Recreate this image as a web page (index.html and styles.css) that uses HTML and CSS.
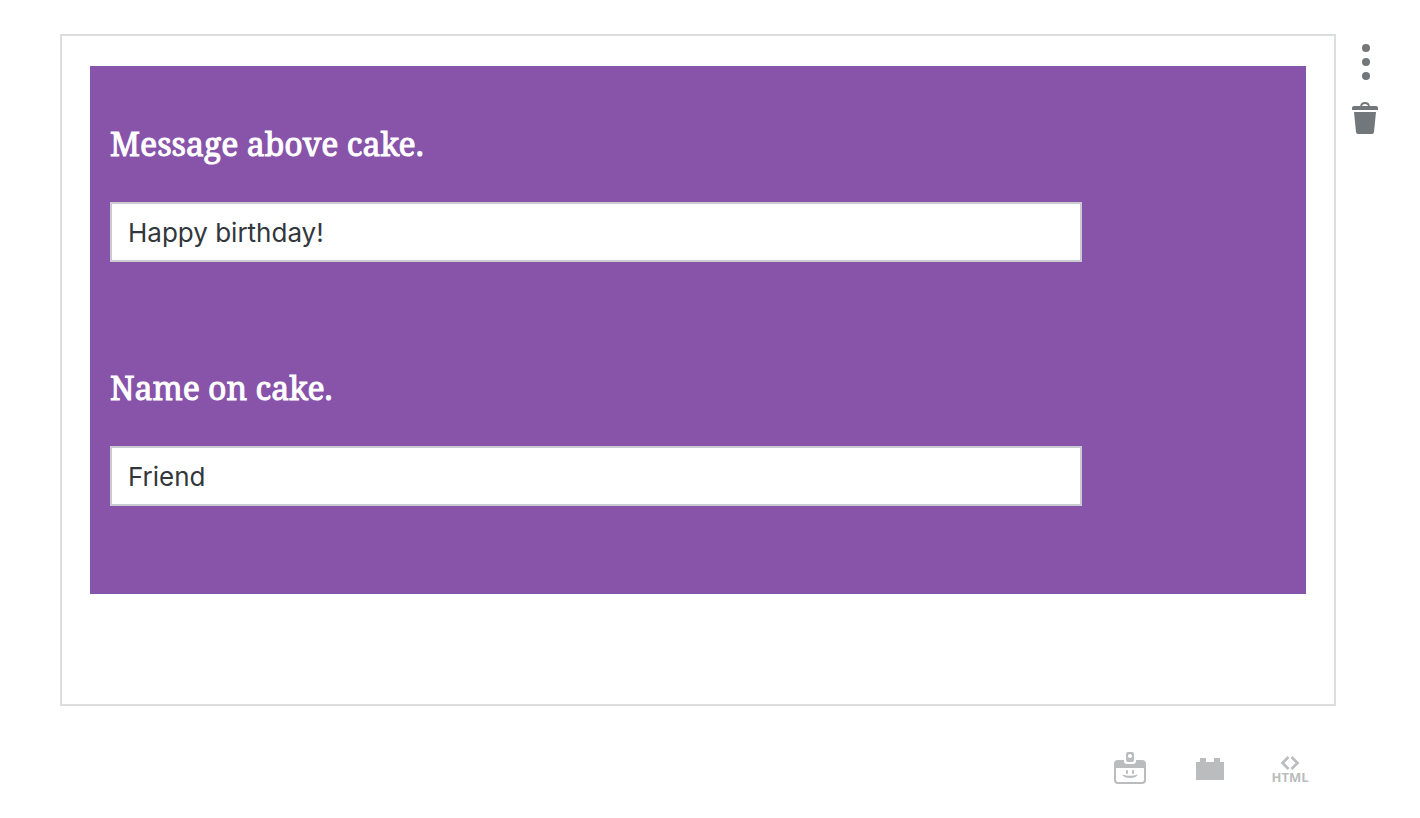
FILE: index.html
```html
<!DOCTYPE html>
<html lang="en">
<head>
<meta charset="utf-8">
<meta name="viewport" content="width=device-width, initial-scale=1">
<title>Cake message block</title>
<link rel="stylesheet" href="styles.css">
</head>
<body>
<main class="editor">
  <div class="block-row">
    <section class="block">
      <form class="cake-form">
        <div class="field">
          <label class="field-label" for="message">Message above cake.</label>
          <input class="field-input" id="message" type="text" value="Happy birthday!">
        </div>
        <div class="field">
          <label class="field-label" for="name">Name on cake.</label>
          <input class="field-input" id="name" type="text" value="Friend">
        </div>
      </form>
    </section>
    <div class="block-actions">
      <button class="icon-button" type="button" aria-label="More options">
        <svg width="28" height="40" viewBox="0 0 28 40" fill="currentColor"><circle cx="14" cy="6" r="4"/><circle cx="14" cy="20" r="4"/><circle cx="14" cy="34" r="4"/></svg>
      </button>
      <button class="icon-button" type="button" aria-label="Delete block">
        <svg width="28" height="34" viewBox="0 0 28 34" fill="currentColor"><path d="M9 4.500C9.500 -.2 16.500 -.2 17 4.500" fill="none" stroke="currentColor" stroke-width="1.800"/><path d="M2 4h22q2 0 2 2v2H0V6q0-2 2-2z"/><path d="M2 10h22l-2 20q-.2 2-2 2H6q-1.800 0-2-2z"/></svg>
      </button>
    </div>
  </div>
  <div class="inserter">
    <button class="icon-button" type="button" aria-label="Insert name badge">
      <svg width="40" height="40" viewBox="0 0 40 40" fill="currentColor"><path fill-rule="evenodd" d="M8 10h6v1q0 3 3 3h6q3 0 3-3v-1h6q4 0 4 4v16q0 4-4 4H8q-4 0-4-4V14q0-4 4-4zM6 18v12q0 2 2 2h24q2 0 2-2V18z"/><path fill-rule="evenodd" d="M18 2h4q2 0 2 2v6q0 2-2 2h-4q-2 0-2-2V4q0-2 2-2zM20 4a2 2 0 1 0 .01 0z"/><rect x="16" y="20" width="2" height="4" rx="1"/><rect x="22" y="20" width="2" height="4" rx="1"/><path d="M12 24.500Q20 27 28 24.500Q26 28 20 28Q14 28 12 24.500z"/></svg>
    </button>
    <button class="icon-button" type="button" aria-label="Insert block">
      <svg width="40" height="40" viewBox="0 0 40 40" fill="currentColor"><path d="M6 12h4V8h6v4h8V8h6v4h4v18H6z"/></svg>
    </button>
    <button class="icon-button html-button" type="button">
      <svg width="20" height="14" viewBox="0 0 20 14" fill="none" stroke="currentColor" stroke-width="2.600" aria-hidden="true"><path d="M8.500 1L2.500 7l6 6M11.500 1l6 6-6 6"/></svg>
      <span class="html-text">HTML</span>
    </button>
  </div>
</main>
</body>
</html>
```
FILE: styles.css
```css
* {
  box-sizing: border-box;
}

body {
  margin: 0;
  background: #fff;
  font-family: Inter, "Noto Sans", sans-serif;
}

.editor {
  padding: 34px 40px 30px 60px;
}

.block-row {
  display: flex;
  align-items: flex-start;
  gap: 16px;
}

.block {
  flex: 1;
  padding: 30px 28px 110px;
  border: 2px solid #dcdddd;
}

.cake-form {
  display: flex;
  flex-direction: column;
  gap: 100px;
  padding: 52px 20px 88px;
  background: #8754aa;
}

.field {
  display: flex;
  flex-direction: column;
  gap: 32px;
  max-width: 972px;
}

.field-label {
  color: #fff;
  font-family: "Noto Serif", "Liberation Serif", serif;
  font-size: 32px;
  font-weight: 400;
  -webkit-text-stroke: 1px #fff;
  line-height: 52px;
}

.field-input {
  width: 100%;
  height: 60px;
  padding: 0 16px;
  border: 2px solid #cacbd0;
  border-radius: 0;
  background: #fff;
  color: #32373c;
  font-family: inherit;
  font-size: 26px;
}

.block-actions {
  display: flex;
  flex-direction: column;
  gap: 20px;
  padding-top: 8px;
  color: #72777c;
}

.icon-button {
  display: flex;
  align-items: center;
  justify-content: center;
  padding: 0;
  border: 0;
  background: none;
  color: inherit;
  cursor: pointer;
}

.inserter {
  display: flex;
  justify-content: flex-end;
  gap: 40px;
  padding: 44px 70px 0 0;
  color: #bbbcbe;
}

.html-button {
  flex-direction: column;
  width: 40px;
  height: 40px;
}

.html-text {
  font-family: "Open Sans", sans-serif;
  font-size: 13px;
  font-weight: 700;
  line-height: 14px;
}
```
